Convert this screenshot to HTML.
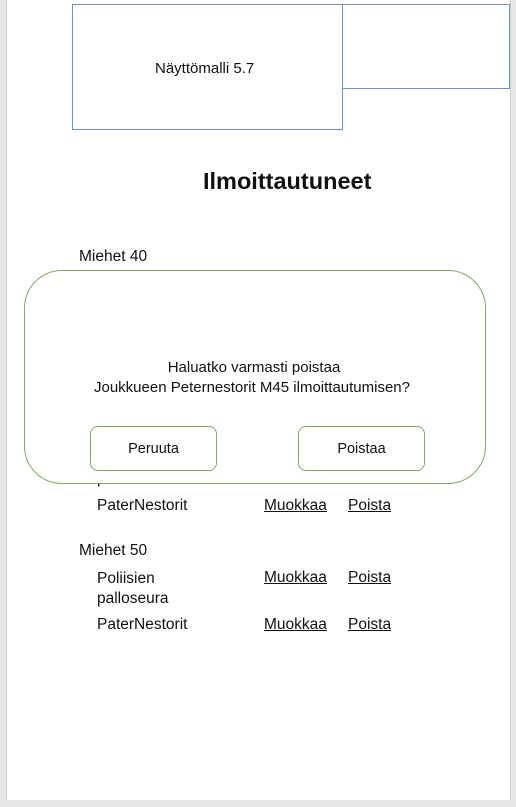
<!DOCTYPE html>
<html><head><style>
body{margin:0;width:516px;height:807px;background:#e6e6e6;position:relative;overflow:hidden;font-family:"Liberation Sans",sans-serif;color:#111;}
.page{position:absolute;left:6px;top:0;width:503px;height:800px;background:#fff;border-left:1px solid #d0d0d0;border-right:1px solid #d0d0d0;}
.a{position:absolute;font-size:15.5px;line-height:18px;white-space:nowrap;}
.u{text-decoration:underline;}
.box{position:absolute;border:1px solid #6f93b8;box-sizing:border-box;}
.btn{position:absolute;border:1px solid #7cad5a;border-radius:8px;box-sizing:border-box;font-size:14.5px;text-align:center;line-height:44px;background:#fff;}
</style></head><body>
<div class="page"></div>
<div class="box" style="left:342px;top:4px;width:168px;height:85px;"></div>
<div class="box" style="left:72px;top:4px;width:271px;height:126px;"></div>
<div class="a" style="left:155px;top:60px;font-size:15px;">Näyttömalli 5.7</div>
<div class="a" style="left:203px;top:167px;font-size:23.5px;line-height:28px;font-weight:bold;">Ilmoittautuneet</div>
<div class="a" style="left:79px;top:248px;">Miehet 40</div>
<div class="a" style="left:97px;top:470px;">p</div>
<div style="position:absolute;left:24px;top:270px;width:462px;height:214px;border:1px solid #7cad5a;border-radius:38px;box-sizing:border-box;background:#fff;"></div>
<div class="a" style="left:0;width:508px;text-align:center;top:359px;font-size:15px;">Haluatko varmasti poistaa</div>
<div class="a" style="left:0;width:504px;text-align:center;top:379px;font-size:15px;">Joukkueen Peternestorit M45 ilmoittautumisen?</div>
<div class="btn" style="left:90px;top:426px;width:127px;height:45px;">Peruuta</div>
<div class="btn" style="left:298px;top:426px;width:127px;height:45px;">Poistaa</div>
<div class="a" style="left:97px;top:497px;">PaterNestorit</div>
<div class="a u" style="left:264px;top:497px;">Muokkaa</div>
<div class="a u" style="left:348px;top:497px;">Poista</div>
<div class="a" style="left:79px;top:542px;">Miehet 50</div>
<div class="a" style="left:97px;top:569px;line-height:20px;">Poliisien<br>palloseura</div>
<div class="a u" style="left:264px;top:569px;">Muokkaa</div>
<div class="a u" style="left:348px;top:569px;">Poista</div>
<div class="a" style="left:97px;top:616px;">PaterNestorit</div>
<div class="a u" style="left:264px;top:616px;">Muokkaa</div>
<div class="a u" style="left:348px;top:616px;">Poista</div>
</body></html>
